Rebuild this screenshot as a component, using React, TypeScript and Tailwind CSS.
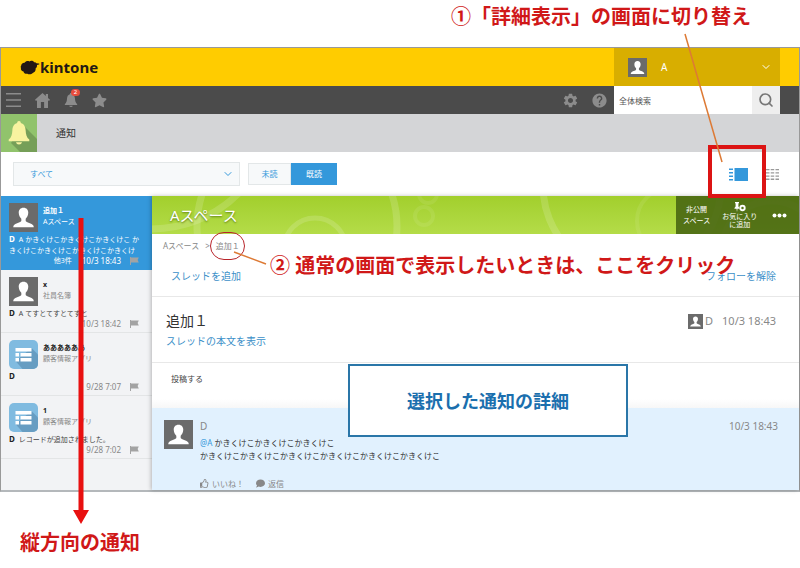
import { ReactNode } from "react";
import { ChevronDown, Search } from "lucide-react";
import { FaComment, FaRegThumbsUp, FaStar } from "react-icons/fa";
import { MdHelp, MdSettings } from "react-icons/md";

interface Notification {
  title: string;
  source: string;
  sender: string;
  body: string;
  date: string;
  more?: string;
  kind: "user" | "app";
  active?: boolean;
}

const notifications: Notification[] = [
  {
    title: "追加１",
    source: "Aスペース",
    sender: "D",
    body: "A かきくけこかきくけこかきくけこ かきくけこかきくけこかきくけこかきくけ",
    date: "10/3 18:43",
    more: "他3件",
    kind: "user",
    active: true,
  },
  { title: "x", source: "社員名簿", sender: "D", body: "A てすとてすとてすと", date: "10/3 18:42", kind: "user" },
  { title: "ああああああ", source: "顧客情報アプリ", sender: "D", body: "", date: "9/28 7:07", kind: "app" },
  { title: "1", source: "顧客情報アプリ", sender: "D", body: "レコードが追加されました。", date: "9/28 7:02", kind: "app" },
];

function Avatar({ className }: { className: string }) {
  return (
    <svg viewBox="0 0 28 28" className={`shrink-0 ${className}`} aria-hidden="true">
      <rect width="28" height="28" fill="#6b6b6b" />
      <path
        d="M14 4.5c-3 0-4.7 2.2-4.6 5 .1 2.600 1.100 4.400 2.500 5.600v2.200c-.6 1.400-6 2-7.400 4.500-.3.600-.4 1.100-.4 1.700h19.800c0-.6-.1-1.100-.4-1.700-1.400-2.500-6.800-3.100-7.400-4.500v-2.200c1.400-1.200 2.400-3 2.500-5.600.1-2.800-1.600-5-4.600-5z"
        fill="#fff"
      />
    </svg>
  );
}

function AppIcon() {
  return (
    <svg viewBox="0 0 29 29" className="size-[29px] shrink-0" aria-hidden="true">
      <rect width="29" height="29" rx="5" fill="#80bbe0" />
      <path d="M22.500 8 29 14.500V24a5 5 0 0 1-5 5H13.500L6.500 21z" fill="#679dc2" />
      <path d="M6.500 8h16v3.500h-16zM6.500 13h3.500v3.500H6.500zM11.500 13h11v3.500h-11zM6.500 18h3.500v3.500H6.500zM11.500 18h11v3.500h-11z" fill="#fff" />
    </svg>
  );
}

function FlagIcon() {
  return (
    <svg viewBox="0 0 9 8" className="h-2 w-[9px]" fill="#a3a3a3" aria-hidden="true">
      <path d="M0 0h1v8H0zM1 .6h7.800L7.600 3l1.200 2.600H1z" />
    </svg>
  );
}

function BellIcon({ className }: { className: string }) {
  return (
    <svg viewBox="0 0 22 26" className={className} fill="currentColor" aria-hidden="true">
      <path d="M11 0c-1.300 0-1.900.9-1.900 2C5.600 3 4.300 6 4.100 9.500 3.900 14 3 17 .3 19.300V21h21.400v-1.700C19 17 18.100 14 17.900 9.500 17.700 6 16.400 3 12.900 2c0-1.100-.6-2-1.900-2zM7.800 22.200a3.300 3 0 0 0 6.400 0z" />
    </svg>
  );
}

function IconButton({ label, className = "", children }: { label: string; className?: string; children: ReactNode }) {
  return (
    <button aria-label={label} className={`flex items-center justify-center ${className}`}>
      {children}
    </button>
  );
}

function BrandBar() {
  return (
    <header className="flex h-[38px] items-stretch justify-between bg-[#ffcc00] pr-[19px]">
      <a href="#" className="flex items-center pl-[19px] text-[#231815]">
        <svg viewBox="0 0 20 15" className="h-[15px] w-5" fill="currentColor" aria-hidden="true">
          <path d="M1.200 5.500C1.500 3.600 3 2.600 4.600 2.800 5.600 1 8 .5 9.300 1.400c1.600-1 4.300-.6 5.100 1 .9-.2 1.600.2 2 .9l2.600.2c.5.200.5.700 0 .900l-2 .5c.2 1.500-.3 2.600-1.300 3.400.2 2.600-1.200 4.200-2.900 4.600-1.200 1.500-4 1.800-5.400.8-2 .4-3.600-.6-3.900-2.300C1.300 11 .5 9.500 1 8c-.5-.8-.3-1.800.2-2.500z" />
        </svg>
        <span className="text-[15px] font-bold">kintone</span>
      </a>
      <button className="flex w-[166px] items-center bg-[#d8ae00] pr-2 pl-[14px] text-white">
        <Avatar className="size-[19px]" />
        <span className="ml-[14px] flex-1 text-left text-[10px]">A</span>
        <ChevronDown size={12} strokeWidth={2} />
      </button>
    </header>
  );
}

function ToolBar() {
  return (
    <nav className="flex h-7 items-stretch bg-[#4b4b4b] pr-[19px] text-[#8c8c8c]">
      <div className="flex items-center pl-[5px]">
        <IconButton label="メニュー" className="w-[15px]">
          <svg viewBox="0 0 15 14" className="h-[14px] w-[15px]" fill="currentColor" aria-hidden="true">
            <path d="M0 0h15v1.500H0zM0 6.200h15v1.500H0zM0 12.500h15V14H0z" />
          </svg>
        </IconButton>
        <IconButton label="ポータル" className="ml-[14px] w-[15px]">
          <svg viewBox="0 0 15 15" className="size-[15px]" fill="currentColor" aria-hidden="true">
            <path d="M7.500 0 0 6.800l1 1.200 1-.8V15h3.900V9h3.200v6H13V7.200l1 .8 1-1.200-2-1.800V1h-2.200v2z" />
          </svg>
        </IconButton>
        <button aria-label="通知" className="relative ml-[14px] flex w-[14px] justify-center">
          <BellIcon className="h-[15px] w-[14px]" />
          <span className="absolute -top-1 left-[7px] flex h-[7px] w-[9px] items-center justify-center rounded-full bg-[#e74c3c] text-[6px] text-white">
            2
          </span>
        </button>
        <IconButton label="お気に入り" className="ml-[14px]">
          <FaStar size={15} />
        </IconButton>
      </div>
      <div className="ml-auto flex items-center gap-3 pr-[6px]">
        <IconButton label="設定">
          <MdSettings size={17} />
        </IconButton>
        <IconButton label="ヘルプ">
          <MdHelp size={17} />
        </IconButton>
      </div>
      <form className="flex w-[166px]" role="search">
        <input
          type="text"
          aria-label="全体検索"
          placeholder="全体検索"
          className="min-w-0 flex-1 bg-white px-[5px] text-[8px] text-black placeholder:text-[#555]"
        />
        <IconButton label="検索" className="w-7 bg-[#eeeeee] text-[#777]">
          <Search size={16} strokeWidth={2.500} />
        </IconButton>
      </form>
    </nav>
  );
}

function TitleBar() {
  return (
    <div className="flex h-[38px] items-center bg-[#d4d5d7]">
      <div className="relative flex h-full w-9 items-center justify-center bg-[#91c36c]">
        <svg viewBox="0 0 36 38" className="absolute inset-0 h-full w-full" aria-hidden="true">
          <path d="M22 11 36 25v13H19l-9-9z" fill="#769f58" />
        </svg>
        <BellIcon className="relative h-[25px] w-[22px] text-[#f8f3a0]" />
      </div>
      <h1 className="ml-[19px] text-[10px] text-[#333]">通知</h1>
    </div>
  );
}

function FilterBar() {
  return (
    <div className="flex h-11 items-center pr-5 pl-3">
      <div className="relative w-[227px]">
        <select
          aria-label="絞り込み"
          className="h-6 w-full appearance-none border border-[#e3e7e8] bg-[#f7f9fa] px-4 text-[8px] text-[#3498db]"
        >
          <option>すべて</option>
        </select>
        <ChevronDown size={12} className="pointer-events-none absolute top-[6px] right-[6px] text-[#3498db]" />
      </div>
      <div className="ml-2 flex h-[22px] text-[8px]">
        <button className="w-[43px] border border-[#e3e7e8] bg-[#f7f9fa] text-[#3498db]">未読</button>
        <button className="w-[46px] bg-[#3498db] text-white">既読</button>
      </div>
      <div className="ml-auto flex items-center gap-[18px]">
        <button aria-label="詳細表示" className="relative">
          <svg viewBox="0 0 19 13" className="h-[13px] w-[19px]" fill="#3498db" aria-hidden="true">
            <path d="M0 .5h4V2H0zM0 4h4v1.500H0zM0 7.500h4V9H0zM0 11h4v1.500H0zM5.500 0H19v13H5.500z" />
          </svg>
          <span className="absolute -top-[23px] -left-[21px] z-20 h-[53px] w-[58px] border-4 border-[#dc1414]" />
        </button>
        <IconButton label="一覧表示">
          <svg viewBox="0 0 13 11" className="h-[11px] w-[13px]" fill="#999" aria-hidden="true">
            <path d="M0 0h3.500v1.300H0zM4.700 0h3.500v1.300H4.700zM9.500 0H13v1.300H9.500zM0 3.200h3.500v1.300H0zM4.700 3.200h3.500v1.300H4.700zM9.500 3.200H13v1.300H9.500zM0 6.400h3.500v1.300H0zM4.700 6.400h3.500v1.300H4.700zM9.500 6.400H13v1.300H9.500zM0 9.600h3.500v1.300H0zM4.700 9.600h3.500v1.300H4.700zM9.500 9.600H13v1.300H9.500z" />
          </svg>
        </IconButton>
      </div>
    </div>
  );
}

function NotificationItem({ item }: { item: Notification }) {
  return (
    <li
      className={`border-b px-2 pt-[7px] pb-[3px] text-[7px] ${
        item.active ? "border-[#3498db] bg-[#3498db] text-white" : "border-[#e3e5e6] text-[#444]"
      }`}
    >
      <div className="flex gap-[5px]">
        {item.kind === "user" ? <Avatar className="size-[29px]" /> : <AppIcon />}
        <div className="pt-[2px] leading-[11px]">
          <p className={`font-bold ${item.active ? "" : "text-[#222]"}`}>{item.title}</p>
          <p className={item.active ? "" : "text-[#888]"}>{item.source}</p>
        </div>
      </div>
      <p className="mt-[2px] leading-[11px]">
        <b className={`mr-1 text-[8px] leading-none ${item.active ? "" : "text-[#222]"}`}>{item.sender}</b>
        {item.body}
      </p>
      <p className={`flex items-center justify-end pr-[5px] leading-[10px] ${item.active ? "" : "text-[#888]"}`}>
        {item.more && <span className="mr-[10px]">{item.more}</span>}
        <span className="mr-[9px] text-[8px]">{item.date}</span>
        <FlagIcon />
      </p>
    </li>
  );
}

function NotificationList() {
  return (
    <aside className="relative w-[151px] shrink-0 bg-[#f2f3f5]">
      <ul>
        {notifications.map((item) => (
          <NotificationItem key={item.date} item={item} />
        ))}
      </ul>
      {/* Arrow down to the caption below the window */}
      <svg viewBox="0 0 16 306" className="absolute top-[22px] left-[72px] z-20 h-[306px] w-4" fill="#e81010" aria-hidden="true">
        <path d="M5.500 0h5v292H16L8 306 0 292h5.500z" />
      </svg>
    </aside>
  );
}

function SpaceHeader() {
  return (
    <div className="relative flex h-[38px] items-stretch justify-between overflow-hidden bg-linear-to-b from-[#a2cf2c] to-[#b4dc48]">
      <svg viewBox="0 0 648 38" preserveAspectRatio="xMinYMin slice" className="absolute inset-0 h-full w-full" fill="none" stroke="#fff" strokeOpacity="0.15" strokeWidth="7" aria-hidden="true">
        <circle cx="0" cy="-90" r="123" />
        <circle cx="145" cy="30" r="100" />
        <circle cx="163" cy="53" r="31" strokeWidth="5" />
        <circle cx="272" cy="20" r="9" strokeWidth="4" strokeOpacity="0.08" />
        <circle cx="276" cy="-2" r="9" strokeWidth="4" strokeOpacity="0.08" />
        <circle cx="518" cy="25" r="33" strokeWidth="4" strokeOpacity="0.08" />
        <circle cx="480" cy="-10" r="89" />
        <circle cx="620" cy="55" r="50" />
      </svg>
      <h2 className="relative self-center pl-[18px] text-[15px] text-white text-shadow-[0_1px_2px_#5a7a10]">Aスペース</h2>
      <div className="relative flex w-[123px] items-center bg-[#496712]/90 pr-3 pl-[7px] text-[7px] text-white">
        <p className="text-center leading-[11px]">
          非公開
          <br />
          スペース
        </p>
        <button className="ml-3 text-center leading-2">
          <svg viewBox="0 0 12 10" className="mx-auto mb-px h-[10px] w-3" aria-hidden="true">
            <path d="M1 0h4v1l-.600.500v3L5.500 6v.8H3.500L3 10l-.5-3.200H.5V6l1.100-1.500v-3L1 1z" fill="#fff" />
            <circle cx="8.500" cy="6" r="2.200" fill="none" stroke="#fff" strokeWidth="1.900" />
          </svg>
          お気に入り
          <br />
          に追加
        </button>
        <IconButton label="その他" className="ml-auto">
          <svg viewBox="0 0 15 5" className="h-[5px] w-[15px]" fill="#fff" aria-hidden="true">
            <circle cx="2.500" cy="2.500" r="2" />
            <circle cx="7.500" cy="2.500" r="2" />
            <circle cx="12.500" cy="2.500" r="2" />
          </svg>
        </IconButton>
      </div>
    </div>
  );
}

function ThreadDetail() {
  return (
    <main className="relative min-w-0 flex-1 shadow-[-1px_0_4px_rgba(0,0,0,0.25)]">
      <SpaceHeader />
      <section className="h-[63px] border-b border-[#e8e8e8] bg-white pt-2 pr-[23px]">
        <div className="flex pl-[11px] text-[8px] leading-2 text-[#888]">
          <a href="#">Aスペース</a>
          <span className="mx-[6px]">&gt;</span>
          <a href="#" className="relative">
            追加１
            <span className="absolute -top-[10px] -left-[6px] h-7 w-[35px] rounded-full border border-[#b8242a]" />
          </a>
        </div>
        <div className="mt-5 flex justify-between pl-[19px] text-[10px] leading-3 text-[#3b8fc8]">
          <a href="#">スレッドを追加</a>
          <a href="#">フォローを解除</a>
        </div>
      </section>
      <section className="h-[66px] border-b border-[#e8e8e8] bg-white pt-4 pr-[23px] pl-[14px]">
        <div className="flex items-center justify-between leading-4">
          <h3 className="text-[14px] text-[#333]">追加１</h3>
          <div className="flex items-center text-[11px] text-[#888]">
            <Avatar className="size-[15px]" />
            <span className="ml-[2px]">D</span>
            <span className="ml-[9px]">10/3 18:43</span>
          </div>
        </div>
        <a href="#" className="mt-[6px] block text-[10px] leading-3 text-[#3b8fc8]">
          スレッドの本文を表示
        </a>
      </section>
      <section className="h-[45px] bg-linear-to-b from-white from-80% to-[#f7f7f7] pt-3 pl-[19px]">
        <button className="block text-[8px] leading-2 text-[#444]">投稿する</button>
      </section>
      <article className="flex h-[82px] bg-[#e1f1fe] pt-3 pr-[21px] pl-3">
        <Avatar className="size-[29px]" />
        <div className="ml-[7px] flex-1">
          <div className="flex justify-between text-[10px] leading-3 text-[#888]">
            <span>D</span>
            <span>10/3 18:43</span>
          </div>
          <p className="mt-1 text-[8px] leading-[13px] text-[#333]">
            <a href="#" className="text-[#3498db]">
              @A
            </a>{" "}
            かきくけこかきくけこかきくけこ
            <br />
            かきくけこかきくけこかきくけこかきくけこかきくけこかきくけこ
          </p>
          <div className="mt-[17px] flex gap-3 text-[8px] text-[#888]">
            <button className="flex items-center gap-[3px]">
              <FaRegThumbsUp size={9} />
              いいね！
            </button>
            <button className="flex items-center gap-[3px]">
              <FaComment size={9} />
              返信
            </button>
          </div>
        </div>
      </article>

      {/* Callouts laid over the pane */}
      <svg viewBox="0 0 34 14" className="absolute top-[55px] left-[81px] h-[14px] w-[34px]" aria-hidden="true">
        <path d="M1 1 33 13" stroke="#dd7a35" strokeWidth="1.500" />
      </svg>
      <p className="absolute top-[59px] left-[118px] z-10 text-[20px] leading-[22px] font-bold whitespace-nowrap text-[#d01818]">
        ② 通常の画面で表示したいときは、ここをクリック
      </p>
      <p className="absolute top-[168px] left-[196px] z-10 flex h-[73px] w-[280px] items-center justify-center border-2 border-[#2a76a8] bg-white text-[18px] font-bold text-[#1b6fae]">
        選択した通知の詳細
      </p>
    </main>
  );
}

export default function App() {
  return (
    <div className="relative bg-white font-['Noto_Sans','Noto_Sans_CJK_JP',sans-serif] leading-none">
      <p className="flex h-[47px] justify-end pt-[6px] pr-[49px] text-[20px] leading-[22px] font-bold text-[#d01818]">
        ①「詳細表示」の画面に切り替え
      </p>
      <div className="border border-b-2 border-[#999] border-b-[#b4b8bb]">
        <BrandBar />
        <ToolBar />
        <TitleBar />
        <FilterBar />
        <div className="flex items-stretch">
          <NotificationList />
          <ThreadDetail />
        </div>
      </div>
      <p className="pt-10 pb-3 pl-5 text-[20px] leading-[22px] font-bold text-[#d01818]">縦方向の通知</p>
      <svg viewBox="0 0 40 130" className="pointer-events-none absolute top-[33px] right-[76px] z-30 h-[130px] w-10" fill="none" aria-hidden="true">
        <path d="M1 1 38 129" stroke="#dd7a35" strokeWidth="1.500" />
      </svg>
    </div>
  );
}
